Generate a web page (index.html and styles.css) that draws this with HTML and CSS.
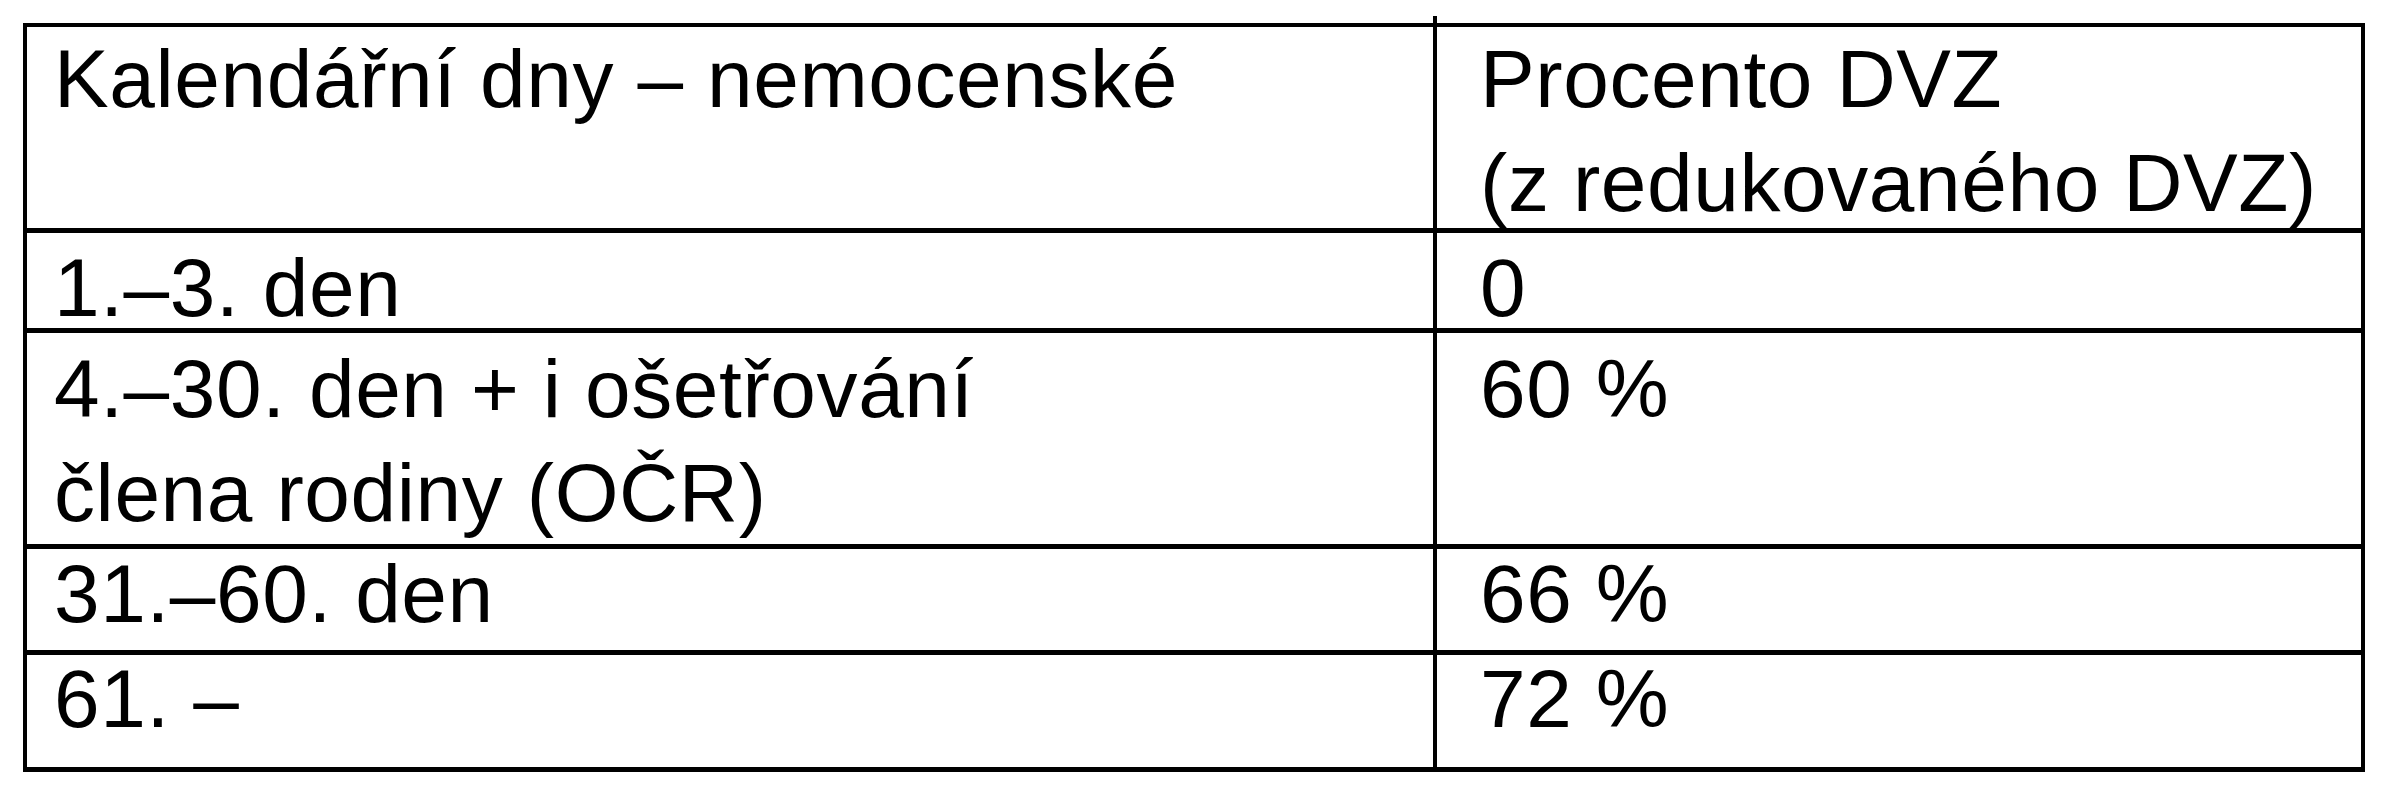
FILE: index.html
```html
<!DOCTYPE html>
<html lang="cs">
<head>
<meta charset="utf-8">
<title>Nemocenské – procento DVZ</title>
<link rel="stylesheet" href="styles.css">
</head>
<body>
<div class="page">
  <div class="table">
    <div class="cell c1 r-head">Kalendářní dny – nemocenské</div>
    <div class="cell c2 r-head">Procento DVZ<br>(z redukovaného DVZ)</div>

    <div class="cell c1 r-1">1.–3. den</div>
    <div class="cell c2 r-1">0</div>

    <div class="cell c1 r-2">4.–30. den + i ošetřování<br>člena rodiny (OČR)</div>
    <div class="cell c2 r-2">60 %</div>

    <div class="cell c1 r-3">31.–60. den</div>
    <div class="cell c2 r-3">66 %</div>

    <div class="cell c1 r-4">61. –</div>
    <div class="cell c2 r-4">72 %</div>
  </div>
</div>
</body>
</html>
```

FILE: styles.css
```css
html, body {
  margin: 0;
  padding: 0;
  background: #ffffff;
}

.page {
  padding: 23px 0 0 23px;
}

.table {
  position: relative;
  box-sizing: border-box;
  width: 2342px;
  display: grid;
  grid-template-columns: 1406px 1fr;
  grid-template-rows: 206px 100px 216px 106px 112px;
  border-top: 4px solid #000;
  border-left: 4px solid #000;
  border-right: 4px solid #000;
  border-bottom: 5px solid #000;
  font-family: "Liberation Sans", Arial, Helvetica, sans-serif;
  font-size: 82px;
  line-height: 104px;
  letter-spacing: 0.6px;
  color: #000;
}

/* column divider that runs past the top and bottom edges */
.table::after {
  content: "";
  position: absolute;
  left: 1406px;
  top: -11px;
  bottom: -10px;
  width: 4px;
  background: #000;
}

.cell {
  box-sizing: border-box;
  border-bottom: 5px solid #000;
  white-space: nowrap;
}

.c1 {
  padding-left: 27px;
}

.c2 {
  padding-left: 47px;
}

.r-head {
  padding-top: 0;
}

.r-1 {
  padding-top: 3px;
}

.r-2 {
  padding-top: 4px;
}

.r-3 {
  line-height: 89px;
}

.r-4 {
  line-height: 87px;
  border-bottom: none;
}
```
